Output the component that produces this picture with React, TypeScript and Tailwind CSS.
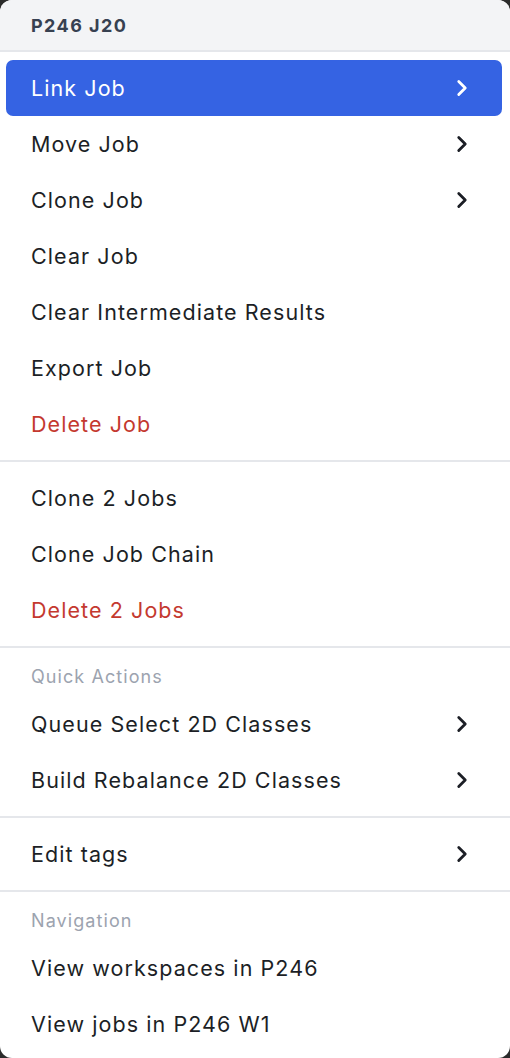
import { ChevronRight } from "lucide-react";

type Item = { label: string; sub?: boolean; danger?: boolean; active?: boolean };

const SECTIONS: { title?: string; items: Item[] }[] = [
  {
    items: [
      { label: "Link Job", sub: true, active: true },
      { label: "Move Job", sub: true },
      { label: "Clone Job", sub: true },
      { label: "Clear Job" },
      { label: "Clear Intermediate Results" },
      { label: "Export Job" },
      { label: "Delete Job", danger: true },
    ],
  },
  {
    items: [{ label: "Clone 2 Jobs" }, { label: "Clone Job Chain" }, { label: "Delete 2 Jobs", danger: true }],
  },
  {
    title: "Quick Actions",
    items: [
      { label: "Queue Select 2D Classes", sub: true },
      { label: "Build Rebalance 2D Classes", sub: true },
    ],
  },
  { items: [{ label: "Edit tags", sub: true }] },
  {
    title: "Navigation",
    items: [{ label: "View workspaces in P246" }, { label: "View jobs in P246 W1" }],
  },
];

function MenuRow({ item }: { item: Item }) {
  const color = item.active ? "bg-[#3563e3] text-white" : item.danger ? "text-[#c4392f]" : "text-[#1c1f26]";
  return (
    <div className={`ml-[6px] mr-2 flex h-14 items-center justify-between rounded-[7px] pl-[25px] pr-[27px] text-[21.5px] tracking-[0.05em] ${color}`}>
      <span>{item.label}</span>
      {item.sub && <ChevronRight size={26} strokeWidth={2.6} />}
    </div>
  );
}

export default function App() {
  return (
    <div className="h-[1058px] w-[510px] bg-[#2b2b2b]" style={{ fontFamily: "Inter, 'Noto Sans', sans-serif" }}>
      <div className="h-full overflow-hidden rounded-[12px] bg-white">
        {/* Header */}
        <div className="flex h-[52px] items-center border-b-2 border-[#e5e7eb] bg-[#f3f4f6] pl-[31px] text-[18px] font-bold tracking-[0.08em] text-[#374151]">
          P246 J20
        </div>

        {SECTIONS.map((section, i) => (
          <div key={i} className={`py-2 ${i > 0 ? "border-t-2 border-[#e5e7eb]" : ""}`}>
            {section.title && (
              <div className="flex h-10 items-center pl-[31px] text-[18px] tracking-[0.06em] text-[#9ca3af]">{section.title}</div>
            )}
            {section.items.map((item) => (
              <MenuRow key={item.label} item={item} />
            ))}
          </div>
        ))}
      </div>
    </div>
  );
}
